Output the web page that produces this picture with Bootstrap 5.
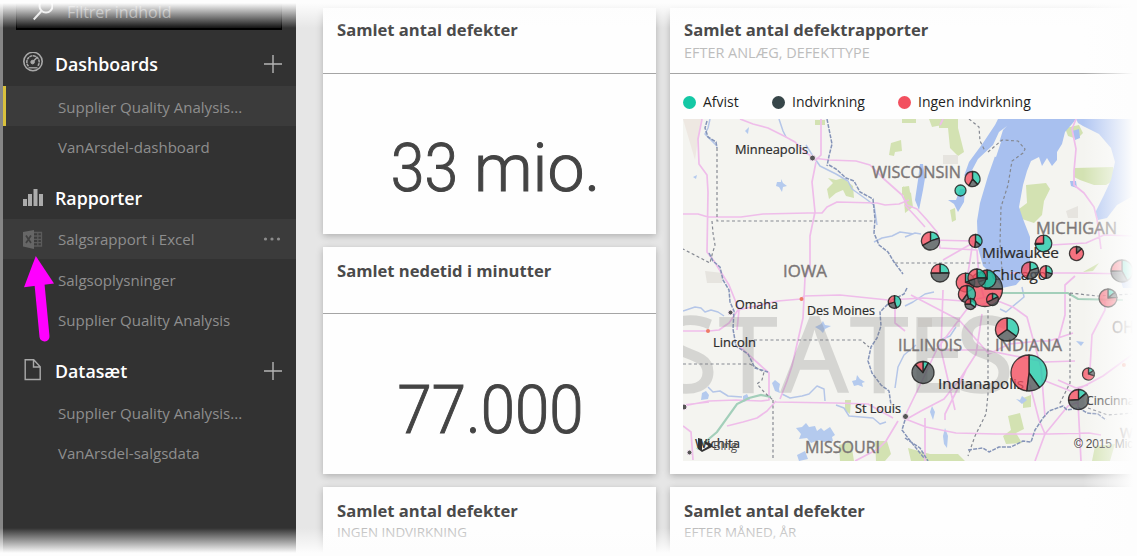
<!DOCTYPE html>
<html lang="da">
<head>
<meta charset="utf-8">
<meta name="viewport" content="width=device-width, initial-scale=1">
<title>Power BI</title>
<link href="https://cdn.jsdelivr.net/npm/bootstrap@5.3.0/dist/css/bootstrap.min.css" rel="stylesheet">
<style>
body{background:#fdfdfd;font-family:"Open Sans","Noto Sans",sans-serif;height:556px;overflow:hidden}
.app{height:556px;padding:3px 4px 3px 0}
.edge{width:3px;background:#868686}
.side{width:293px;background:#323232}
.search{height:27px;margin:0 14px 0 13px;background:#141414;border:1px solid #000;border-top:0;border-bottom-width:2px;color:#7c7c7c;font-size:16px}
.search span{line-height:19px;margin-left:14px;letter-spacing:-.05px}
.side-head{height:44px;margin-top:9px;padding:2px 13px 0 19px;color:#fff;font-size:17.8px;font-weight:600}
.side-head .ico{width:33px;flex:none}
.side-head.first{margin-top:12px;padding-top:0}
.side-item{height:40px;padding-left:55px;color:#8e8e8e;font-size:15.05px;line-height:42px;position:relative;white-space:nowrap}
.side-item.on{background:#3b3b3b}
.side-item.sel{box-shadow:inset 3px 0 #d9c13c}
.side-item .xl{position:absolute;left:19px;top:10px}
.dots{margin-right:15px}
.board{background:#e6e6e6;padding:5px 0 0 27px;gap:14px}
.tiles{width:333px;gap:13px}
.tile{background:#fefefe;box-shadow:0 2px 7px rgba(0,0,0,.24);height:227px;flex:none}
.tile.r1{height:226px}
.tile-head{height:67px;border-bottom:1px solid #a5a5a5;padding:13px 14px 0;white-space:nowrap}
.r1 .tile-head{height:66px;padding-top:11px}
.tile-head h2{font-size:16.6px;font-weight:700;line-height:22px;margin:0;color:#4a4a4a}
.tile-head p{font-size:13.4px;line-height:21px;margin:0;color:#bdbdbd}
.r1 .tile-head p{font-size:14.45px;line-height:23px}
.big{font-family:Roboto,sans-serif;font-weight:300;font-size:66px;color:#444;line-height:1;-webkit-text-stroke:1px #444}
.b1{margin:6px 0 0 6px}
.b1 b{display:inline-block;font-weight:300;transform:scaleX(.92);transform-origin:right}
.b2{margin:9px 0 0 1px;transform:scaleX(.935)}
.legend{height:45px;padding:11px 0 0 13px}
.legend span{font-size:14px;color:#1e1e1e;white-space:nowrap;line-height:20px;margin-left:7px}
.legend i{width:13px;height:13px;border-radius:50%;flex:none}
.legend .l1{width:69px}
.legend .l2{width:106px}
#map{margin-left:13px}
.veil{position:absolute;pointer-events:none;z-index:5}
.veil-t{left:0;right:0;top:3px;height:25px;background:linear-gradient(#fdfdfd,rgba(253,253,253,0))}
.veil-b{left:0;right:0;bottom:3px;height:25px;background:linear-gradient(rgba(253,253,253,0),#fdfdfd)}
.veil-r{right:4px;top:0;bottom:0;width:50px;background:linear-gradient(90deg,rgba(253,253,253,0),#fdfdfd)}
.pointer{position:absolute;left:14px;top:250px;z-index:6}
</style>
</head>
<body>
<div class="app d-flex position-relative">
  <div class="edge"></div>
  <nav class="side d-flex flex-column flex-shrink-0">
    <div class="search d-flex">
      <svg class="ms-3" width="20" height="18" viewBox="0 0 20 18" fill="none" stroke="#ddd" stroke-width="2"><circle cx="13" cy="3" r="6.5"/><path d="M8.500 8 0.700 16.500"/></svg>
      <span>Filtrer indhold</span>
    </div>
    <div class="side-head first d-flex align-items-center">
      <svg class="ico" width="33" height="24" viewBox="0 0 33 24" fill="none" stroke="#a9a9a9"><g transform="translate(1 -.5)"><circle cx="10" cy="10" r="9.2" stroke-width="1.6"/><path d="M5.500 14.800A6.200 6.200 0 1 1 14.500 14.800" stroke-width="1.500" stroke-dasharray="3 .5"/><path d="M5.500 16.300H14.500" stroke-width="1.300"/><circle cx="9.600" cy="10.600" r="1.800" fill="#a9a9a9"/><path d="m10 10 4.500-4.500" stroke-width="1.600"/></g></svg>
      <span>Dashboards</span>
      <svg class="ms-auto" width="20" height="20" viewBox="0 0 20 20" stroke="#b5b5b5" stroke-width="1.400"><path d="M10 1v18M1 10h18"/></svg>
    </div>
    <div class="side-item on sel">Supplier Quality Analysis...</div>
    <div class="side-item">VanArsdel-dashboard</div>
    <div class="side-head d-flex align-items-center">
      <svg class="ico" width="33" height="24" viewBox="0 0 33 24" fill="#ababab"><path d="M1 13h4v7H1zM6 8h4v12H6zM11.500 3h4v17h-4zM17 8h4v12h-4z"/></svg>
      <span>Rapporter</span>
    </div>
    <div class="side-item on d-flex align-items-center">
      <svg class="xl" width="22" height="22" viewBox="0 0 22 22"><path fill="#666" d="M1 3 12 1v19L1 17.500z"/><path d="M12 3.500h7.500v13.500H12M12 7h7.500M12 10.300h7.500M12 13.600h7.500M15.800 3.500v13.500" fill="none" stroke="#5b5b5b" stroke-width="1.300"/><path d="m4 6.500 5 7.500M9 6.500 4 14" stroke="#404040" stroke-width="1.700"/></svg>
      <span>Salgsrapport i Excel</span>
      <svg class="dots ms-auto" width="18" height="6" viewBox="0 0 18 6" fill="#8c8c8c"><circle cx="2.500" cy="3" r="1.600"/><circle cx="9" cy="3" r="1.600"/><circle cx="15.500" cy="3" r="1.600"/></svg>
    </div>
    <div class="side-item">Salgsoplysninger</div>
    <div class="side-item">Supplier Quality Analysis</div>
    <div class="side-head d-flex align-items-center">
      <svg class="ico" width="33" height="24" viewBox="0 0 33 24" fill="none" stroke="#a9a9a9" stroke-width="1.400"><path d="M3.200.800h8.500l6.500 7V20.500h-15zM11.500.800v7.200h6.500"/></svg>
      <span>Datasæt</span>
      <svg class="ms-auto" width="20" height="20" viewBox="0 0 20 20" stroke="#b5b5b5" stroke-width="1.400"><path d="M10 1v18M1 10h18"/></svg>
    </div>
    <div class="side-item">Supplier Quality Analysis...</div>
    <div class="side-item">VanArsdel-salgsdata</div>
  </nav>

  <main class="board d-flex flex-grow-1 overflow-hidden">
    <div class="tiles d-flex flex-column flex-shrink-0">
      <section class="tile r1 d-flex flex-column">
        <div class="tile-head"><h2>Samlet antal defekter</h2></div>
        <div class="flex-grow-1 d-flex align-items-center justify-content-center pt-4"><span class="big b1"><b>33</b> mio.</span></div>
      </section>
      <section class="tile d-flex flex-column">
        <div class="tile-head"><h2>Samlet nedetid i minutter</h2></div>
        <div class="flex-grow-1 d-flex align-items-center justify-content-center pt-4"><span class="big b2">77.000</span></div>
      </section>
      <section class="tile">
        <div class="tile-head"><h2>Samlet antal defekter</h2><p>INGEN INDVIRKNING</p></div>
      </section>
    </div>
    <div class="tiles d-flex flex-column flex-grow-1">
      <section class="tile r1" style="height:466px">
        <div class="tile-head"><h2>Samlet antal defektrapporter</h2><p>EFTER ANLÆG, DEFEKTTYPE</p></div>
        <div class="legend d-flex align-items-center">
          <i style="background:#14c8a5"></i><span class="l1">Afvist</span>
          <i style="background:#374649"></i><span class="l2">Indvirkning</span>
          <i style="background:#f2505f"></i><span>Ingen indvirkning</span>
        </div>
        <svg id="map" class="d-block" width="450" height="342" viewBox="683 119 450 342" font-family="'Open Sans','Noto Sans',sans-serif">
          <rect x="683" y="119" width="450" height="342" fill="#f4f4f0"/>
          <path d="M683 119h18l-6 41z" fill="#eee8e2"/>
          <g fill="#d3e2b2">
            <path d="M891 143l10-3 1 11-7 1-1 4-5-1zM815 120h10v5h-10zM828 178l8 2 7-2 10 8 1 12-8-2-3-6-7 3-7 6-2-10 6-6zM902 187l7-1 2 12-9-3zM902 119h14v4h-14zM939 119h19v9h-19zM948 128h10l6 24-6 4-8-8zM929 119h10l3 6-10 2zM950 210l5-2 1 12-4 2zM903 186l8 7 2 14-8 6zM1026 185l20-2 4 6-6 12-2 14-8 8-12-4-3-10 8-6zM1075 168l38-1 3 12-10 6h-12l-14-5-6-3zM1065 128l14-3 4 8-6 6-9-3z"/>
            <path d="M839 445l12-3 3 19h-14zM875 441l12 0 4 13-6 7h-9zM845 400l6 0-1 14-5-4zM908 448l22 6 28 0 7 7h-54zM1008 416l12-3 4 16-8 4 6 10-16 1-3-8 8-6zM1023 398l8-3v12l-8 1zM1095 446l20-2-5 17h-18zM1083 272l16-9-6 8z"/>
          </g>
          <g fill="#e6e4df"><path d="M705 271l18 2-1 10h-15zM918 318h14v9h-14zM943 155h15v9h-15zM1066 211l12-5v12h-10z"/></g>
          <g fill="#a8c0ef">
            <path d="M1000 119h76l-4 5-7 8-3 12-5 8 0 8-5 6-5-8-5 8-3-9-8 4-4 10-4 14-4 22 4 12 7 18v28l-5 10-9 10-14 3-8-12-11-10-5-18-1-27 3-18 8-27 6-17 9-29 4-4-8 6-6 13-15 14-8 15-6 2 5-14 14-19 12-18 8-16z"/>
            <path d="M1076 119h57v77l-16 9-10 13-9 2-3-7 9-18 7-15 4-18-4-14-12-14-16-8-5-3z" fill="#b1c6f2"/>
            <path d="M960 189l5 0-1 13-6 10-4-8-6-4 8 0zM918 180l2-16 3 0 2 14-2 12-4 20-4-10zM1121 281l12-4v11h-10zM1072 131l7-2 1 9-5 2zM1070 181l6 0 1 7-6-2z"/>
          </g>
          <path d="M1001 142l-5 15-3-1 6-15z" fill="#f4f4f0"/>
          <g fill="none" stroke="#b5c6e8" stroke-width="1.500" stroke-linejoin="round">
            <path d="M710 119l-2 9-3 6 12 12M779 119l4 12 3 6M806 145l5 8 9 13 16 8 12 7 4 8 14 10 8 6 3 20M874 242l8-4 10-2 8-4 14 2M683 311l12-4 6 1 4 4 6-2 7 2 6 4M708 387l5 5 7-1 8 5 14 1M782 394l8 4 12-2 7-2 8-8 7 3 1 12M836 405l8 3 5 8 12 1 12 1 7 6 6-2M895 388l3-21 6-12 12-10M905 306l8-4 12-8 9-2M1000 309l6 3 18-15-2-10M940 340l10-4 6-9M905 237l10-4 6 1"/>
          </g>
          <g fill="#b4caee"><path d="M777 182h4v-3l2 4 4 3-4 1-1 5-3-5-3-1zM815 327l6-3 2-3 2 4 6 1-6 3-2 4-3-3zM852 381l4-1 1-5 3 4 5 3-3 1 1 4-5-2-4 1zM796 428l6-1 4-4 3 4 6-1 2 5 4-3 3 3 6-4 5 8-3 2 1 4-9 1-5-2-8 3-4-5-8 1 2-5zM797 455l8-4 3 8-9 2zM702 393l4-2 3 4-1 4-7 1zM743 396l4-2 3 6-7 2zM772 383l3-3 5 4-1 5 1 4-5-2zM930 412l2-6 3 6-2 8zM943 436l2-8 3 8-1 12-3-4zM745 131l4-4-1 7zM1076 341l8 1-3 4zM1016 399l4 1 2-4 5 4-5 4zM693 177l4-2-1 4z"/></g>
          <g fill="none" stroke="#efbdea" stroke-width="1.700" stroke-linejoin="round">
            <path d="M702 119l-4 20 1 25 8 11 1 17-1 60 7 9 15 24 10 25-2 20M740 119l13 5 15 4 16 8 11 6 11 11 7 4M821 119v36l-6 6M816 162l-4 20 3 30-5 24 0 10 0 20-5 12-2 40-11 48-5 15-7 18M813 158l16 2 27 1 14 4 14 14 18 16 5 10 10 4 10 11 10 12 3 16 37 2 2 28 5 20M683 214l15 0 10 3 33 0 22-3 45-1 14 0 5-6 10-5 40 1 8 2 14-1 10-4"/>
            <path d="M683 331l26 0 10-1 10-7 9-13 40-9 23-2 3-3 36-1 48 5 35-2 40 3 25-4 25 10 14 10 6 22 8 28 4 50M740 347l20 18 9 8 0 27-8 1-25-1-27 1-26 5M776 401l-9 10-10 7-14 4-16 4M905 420l16-9 23-12 16-20 16-25 6-40M903 418l23 9 30 6 40 1 53 0 40-1 12 2M905 416l16-33 16-34 30-40 20-6M925 418v43M945 420l0-6 12-24 9-20M898 421l-12 20-8 8-23 12M776 402l60 1 32 1 25 14M943 119l-3 6M911 295l48 25 30 34 20-10 30-3 10 0 24-8M1057 345l8-30 0-30 10-9M905 205l12 13 8 9M1076 119l-4 10 4 20-2 22 0 14 10 8 10 14 3 12 4 30M1058 380l18 8 12-3M1035 461l10-27 23-28 10-4 3 59M1030 385l9 35 6 14M1010 273l65 0 58 1M1105 300l0 10-13 25-2 34M1043 380l30 12 30-16 30-22M1051 245l35-2 18-8 29 1M929 240l44 1-7 45M943 260l28-16M943 290l-2 60 14 60M945 350h40l60 12 30-1M683 426l8 6 2 28M683 405l26-3M895 300v23l10 8"/>
          </g>
          <path d="M697 449l20-17 20-28 12-6 12-3 10 2M1000 293h68l10 6 45 1" fill="none" stroke="#a3cfba" stroke-width="2.200"/>
          <g fill="none" stroke="#858992" stroke-width="1.200" stroke-dasharray="3 2.500">
            <path d="M717 148v73h157M712 221l1 12 2 12-3 10-2 8-27-14M683 364h67M754 340h107l8 7M773 400v60M895 263h95M988 310v84l-2 20-11 22-7 20M750 364l14 8-2 8-5 4 8 9 8 7M1070 293v90l-11 22M969 119l10 8 1 14 5 10M988 152l14-12 16 1 7 8-2 4-11 8-4 24-7 22-1 36 3 40M1070 293l27 3 36-2M1088 408l20 7 25-2"/>
          </g>
          <g fill="none" stroke="#8594b8" stroke-width="1.500" stroke-dasharray="4 1.200" stroke-linejoin="round">
            <path d="M707 121l-2 7 3 9 8 5 1 6M709 253l4 8 7 6 3 13 6 10 1 12 4 9-1 18 3 17 12 8 7 14 13 4M827 119l3 15 2 10-3 12-2 10M829 165l7 4 10 9 8 3 6 11 13 7 2 20-1 14 5 12 9 7 6 10 9 12M907 288l-3 6-12 6-12 12 1 14-4 12-6 9-3 14 4 12 9 12 8 6 2 14M905 420l-3 10 6 8 16 20M905 438l15 10 8 13M968 450l15-2 6 4 10-5 12 0 12-6 8 1 4-12 8-12 6-7 14-5 4 4 12-2 8 5 11 1 8 6"/>
          </g>
          <g font-family="'Noto Sans','Open Sans',sans-serif" font-size="105" fill="#777" stroke="#777" stroke-width="1.500" opacity=".24">
            <text x="660" y="392">S</text><text x="719" y="392">T</text><text x="781" y="392">A</text><text x="850" y="392">T</text><text x="907" y="392">E</text><text x="956" y="392">S</text>
          </g>
          <g fill="#ee7a66"><circle cx="708" cy="331" r="2"/><circle cx="801.500" cy="299" r="2"/><circle cx="1124" cy="365" r="2"/></g>
          <g fill="#555" stroke="#f8e8f6" stroke-width="1"><circle cx="812.500" cy="158" r="3"/><circle cx="730.500" cy="312.500" r="2.500"/><circle cx="684" cy="407" r="3"/><circle cx="905.500" cy="416.500" r="3"/><circle cx="689.500" cy="452.500" r="2.500"/></g>
          <g fill="#7b7676" font-size="16.500" stroke="#7b7676" stroke-width=".4">
            <text x="872" y="178" textLength="89" lengthAdjust="spacingAndGlyphs">WISCONSIN</text>
            <text x="1036" y="234" textLength="81" lengthAdjust="spacingAndGlyphs">MICHIGAN</text>
            <text x="783" y="277" textLength="44" lengthAdjust="spacingAndGlyphs">IOWA</text>
            <text x="898" y="351" textLength="64" lengthAdjust="spacingAndGlyphs">ILLINOIS</text>
            <text x="995" y="351" textLength="67" lengthAdjust="spacingAndGlyphs">INDIANA</text>
            <text x="805" y="453" textLength="75" lengthAdjust="spacingAndGlyphs">MISSOURI</text>
            <text x="1112" y="333" textLength="37" lengthAdjust="spacingAndGlyphs">OHIO</text>
            <text x="1120" y="438" font-size="14">WV</text>
          </g>
          <g fill="#2b2b2b" font-size="13" stroke="#2b2b2b" stroke-width=".2">
            <text x="735" y="154" textLength="73" lengthAdjust="spacingAndGlyphs">Minneapolis</text>
            <text x="735" y="308.500" textLength="43" lengthAdjust="spacingAndGlyphs">Omaha</text>
            <text x="807" y="315" textLength="68" lengthAdjust="spacingAndGlyphs">Des Moines</text>
            <text x="713" y="347" textLength="43" lengthAdjust="spacingAndGlyphs">Lincoln</text>
            <text x="855" y="413" textLength="46" lengthAdjust="spacingAndGlyphs">St Louis</text>
            <text x="982" y="257.500" font-size="15" textLength="77" lengthAdjust="spacingAndGlyphs">Milwaukee</text>
            <text x="991" y="280" font-size="15" textLength="56" lengthAdjust="spacingAndGlyphs">Chicago</text>
            <text x="938" y="389" font-size="14" textLength="86" lengthAdjust="spacingAndGlyphs">Indianapolis</text>
            <text x="1086" y="405" font-size="13" textLength="56" lengthAdjust="spacingAndGlyphs">Cincinnati</text>
            <text x="695" y="448" font-size="13" textLength="45" lengthAdjust="spacingAndGlyphs">Wichita</text>
            <text x="713" y="450" font-size="12" stroke="none" fill="#555" textLength="24" lengthAdjust="spacingAndGlyphs">Bing</text>
            <text x="1074" y="448" font-size="12" font-family="'Liberation Sans',sans-serif" stroke="none" textLength="88">© 2015 Microsoft</text>
          </g>
          <path d="M698 438l4 1v11l7-4-4-2-1-3 8 3v3l-10 5-4-3z" fill="#333"/>
          <g id="pies" stroke="#222" stroke-linejoin="round"></g>
        </svg>
      </section>
      <section class="tile">
        <div class="tile-head"><h2>Samlet antal defekter</h2><p>EFTER MÅNED, ÅR</p></div>
      </section>
    </div>
  </main>

  <svg class="pointer" width="50" height="96" viewBox="14 250 50 96"><path d="M39.500 284 44.500 336.500" stroke="#f0f" stroke-width="10" stroke-linecap="round"/><path d="M35.800 256 24 287.200 54 283.500z" fill="#f0f"/></svg>
  <div class="veil veil-t"></div><div class="veil veil-b"></div><div class="veil veil-r"></div>
</div>
<script src="https://cdn.jsdelivr.net/npm/bootstrap@5.3.0/dist/js/bootstrap.bundle.min.js"></script>
<script>
// x, y, radius, share "Afvist", share "Indvirkning"; the rest is "Ingen indvirkning"
const sites = [
  [972.5,179,7.5,.38,.2],[960.5,190.5,5.5,1,0],[930.5,241,9,.2,.47],[975.5,241,6.5,.36,.16],
  [1043.5,243.5,8.3,.73,.02],[1076.5,253.5,7,0,.13],[1122,271,11,.42,.33],[940,273,9,.25,.5],
  [1030,270.5,8.5,.2,.37],[1046,272,6.3,.3,.2],[985,289,17.5,0,.25],[965.5,282.5,9.3,.18,.12],
  [987,279,9,.7,.2],[977,278,9,.25,.45],[967,294,8.5,.45,.15],[970.5,304,5.5,.35,.4],[992.5,299.5,6,.18,.5],
  [894.5,302,6.3,.45,.25],[1007,329.5,11.5,.35,.3],[923,372.5,11,.08,.8],[1029,373,18,.4,.12],
  [1108,298,9,.14,.1],[1088.5,374,6,.15,.15],[1078.5,399.5,10,.14,.6]
];
const colors = ['#1fcba9','#4d5557','#f54d5f'];
let out = '';
for (const [x,y,r,a,b] of sites) {
  let from = 0;
  [a, b, 1-a-b].forEach((share,i) => {
    if (share <= .001) return;
    const look = `fill="${colors[i]}" fill-opacity=".78" stroke-width="1.3" stroke-opacity=".85"`;
    if (share > .999) { out += `<circle cx="${x}" cy="${y}" r="${r}" ${look}/>`; return; }
    const p = t => `${x + r*Math.sin(t*2*Math.PI)} ${y - r*Math.cos(t*2*Math.PI)}`;
    out += `<path d="M${x} ${y}L${p(from)}A${r} ${r} 0 ${share > .5 ? 1 : 0} 1 ${p(from+share)}Z" ${look}/>`;
    from += share;
  });
}
document.getElementById('pies').innerHTML = out;
</script>
</body>
</html>
